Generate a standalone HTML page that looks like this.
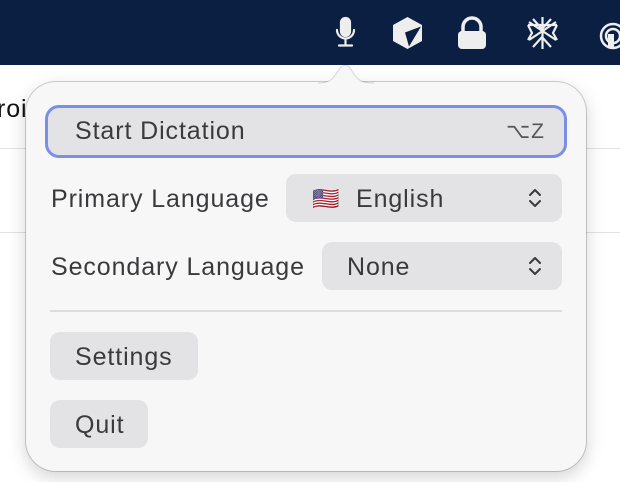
<!DOCTYPE html>
<html><head><meta charset="utf-8"><style>
*{margin:0;padding:0;box-sizing:border-box}
body{width:620px;height:482px;overflow:hidden;background:#fff;position:relative;font-family:"Liberation Sans",sans-serif;}
.bar{position:absolute;left:0;top:0;width:620px;height:65px;background:#0b1f42}
.line{position:absolute;height:1px;background:#e2e2e2}
.pop{position:absolute;left:26px;top:82px;width:560px;height:389px;background:#f7f7f8;border-radius:30px;box-shadow:0 0 0 1px rgba(0,0,0,.18),0 6px 18px rgba(0,0,0,.18)}
.t{position:absolute;font-size:25px;letter-spacing:0.9px;color:#3a3a3c;line-height:1}
.btn{position:absolute;background:#e3e3e6;border-radius:10px}
.chev{position:absolute;width:14px;height:22px}
</style></head><body>
<div class="bar"></div>
<div class="line" style="left:0;top:148px;width:30px"></div>
<div class="line" style="left:0;top:232px;width:30px"></div>
<div class="line" style="left:586px;top:148px;width:34px"></div>
<div class="line" style="left:586px;top:232px;width:34px"></div>
<div class="t" style="left:-3px;top:97px;color:#111">roi</div>
<svg style="position:absolute;left:0;top:0" width="620" height="66">
<g fill="none" stroke="#eee" stroke-width="2.2" stroke-linecap="round">
<rect x="341" y="18" width="9" height="18" rx="4.5" fill="#eee"/>
<path d="M337 30a8.5 8.5 0 0 0 17 0M345.5 39v6M339 45.5h13"/>
</g>
<path d="M407.5 17l14.5 8v16l-14.5 8l-14.5-8v-16z" fill="#eee"/>
<path d="M405 32.5l16-6l-12 20z" fill="#0b1f42"/>
<rect x="458" y="31" width="28" height="18" rx="4" fill="#eee"/>
<path d="M463 32v-5a9 9 0 0 1 18 0v5" fill="none" stroke="#eee" stroke-width="3.5"/>
<g stroke="#eee" stroke-width="2.2" fill="none">
<path d="M542.5 17v32M528 25l29 0M529 22l27 18M556 22l-27 18M533 19l9 10 9-10M533 47l9-10 9 10M528 25l4 8-4 7M557 25l-4 8 4 7"/>
</g>
<g stroke="#eee" stroke-width="2.5" fill="none">
<circle cx="613" cy="36" r="12"/><circle cx="613" cy="36" r="7"/>
</g>
<rect x="608" y="34" width="6" height="14" fill="#eee"/>
</svg>
<div class="pop"></div>
<svg style="position:absolute;left:318px;top:62px" width="56" height="22"><path d="M0 21c10 0 14-2 20-12c4-7 10-8 14 0c6 10 10 12 22 12z" fill="#f7f7f8"/><path d="M0 21c10 0 14-2 20-12c4-7 10-8 14 0c6 10 10 12 22 12" fill="none" stroke="rgba(0,0,0,.15)"/></svg>
<div style="position:absolute;left:45px;top:105px;width:522px;height:53px;border:3.5px solid #7b8fe9;border-radius:14px;background:#e3e3e6"></div>
<div class="t" style="left:75px;top:119px">Start Dictation</div>
<div class="t" style="left:506px;top:121px;font-size:21px;color:#555">⌥Z</div>
<div class="t" style="left:51px;top:187px">Primary Language</div>
<div class="btn" style="left:286px;top:174px;width:276px;height:48px"></div>
<div class="t" style="left:312px;top:188px;font-size:22px">🇺🇸</div>
<div class="t" style="left:356px;top:187px">English</div>
<div class="t" style="left:51px;top:255px">Secondary Language</div>
<div class="btn" style="left:322px;top:242px;width:240px;height:48px"></div>
<div class="t" style="left:347px;top:255px">None</div>
<svg class="chev" style="left:528px;top:187px" viewBox="0 0 14 22"><path d="M2 8l5-5 5 5M2 14l5 5 5-5" fill="none" stroke="#3a3a3c" stroke-width="2" stroke-linecap="round" stroke-linejoin="round"/></svg>
<svg class="chev" style="left:528px;top:255px" viewBox="0 0 14 22"><path d="M2 8l5-5 5 5M2 14l5 5 5-5" fill="none" stroke="#3a3a3c" stroke-width="2" stroke-linecap="round" stroke-linejoin="round"/></svg>
<div style="position:absolute;left:50px;top:310px;width:512px;height:1.5px;background:#dcdcde"></div>
<div class="btn" style="left:50px;top:332px;width:148px;height:48px"></div>
<div class="t" style="left:75px;top:345px">Settings</div>
<div class="btn" style="left:50px;top:400px;width:98px;height:48px"></div>
<div class="t" style="left:75px;top:413px">Quit</div>
</body></html>
